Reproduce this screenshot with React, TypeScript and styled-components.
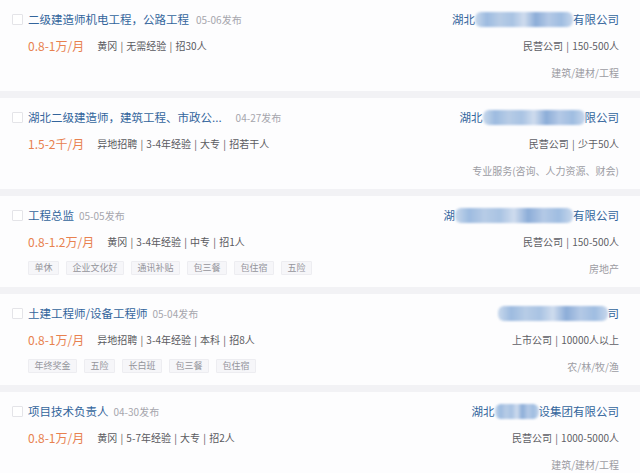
import React from "react";
import styled, { createGlobalStyle } from "styled-components";

const Global = createGlobalStyle`
  html, body { margin: 0; padding: 0; background: #f2f2f5; overflow: hidden; }
  body { font-family: "Noto Sans CJK SC", "Noto Sans", sans-serif; }
`;

const List = styled.div`
  width: 640px;
  height: 473px;
  display: flex;
  flex-direction: column;
  gap: 7px;
  overflow: hidden;
  background: #f2f2f5;
`;

const Card = styled.div`
  flex: 0 0 91px;
  height: 91px;
  box-sizing: border-box;
  background: #fdfdfe;
  display: flex;
  justify-content: space-between;
  padding: 6px 21px 0 12px;
`;

const Left = styled.div`
  display: flex;
  flex-direction: column;
`;

const Right = styled.div`
  display: flex;
  flex-direction: column;
  align-items: flex-end;
`;

const Row = styled.div<{ $h?: number }>`
  height: ${(p) => p.$h ?? 26}px;
  display: flex;
  align-items: center;
  white-space: nowrap;
`;

const Check = styled.span`
  width: 9px;
  height: 9px;
  border: 1px solid #e4e4e8;
  border-radius: 1px;
  background: #fff;
  margin-right: 5px;
  flex: none;
`;

const Title = styled.span`
  font-size: 11.5px;
  color: #33659c;
`;

const DateText = styled.span<{ $gap: number }>`
  font-size: 10px;
  color: #a6a6ad;
  margin-left: ${(p) => p.$gap}px;
`;

const Salary = styled.span`
  font-size: 12px;
  color: #e8814f;
  margin-left: 16px;
  margin-right: 13px;
`;

const Info = styled.span`
  font-size: 10px;
  color: #5a5a60;
  word-spacing: 1px;
`;

const Tags = styled.div`
  display: flex;
  gap: 7px;
  margin-left: 16px;
`;

const Tag = styled.span`
  height: 14px;
  line-height: 14px;
  padding: 0 5.5px;
  font-size: 9px;
  color: #94949b;
  background: #f6f6f9;
  border: 1px solid #ededf1;
  border-radius: 1px;
  box-sizing: border-box;
  display: inline-flex;
  align-items: center;
`;

const Company = styled.span`
  font-size: 11.5px;
  color: #33659c;
  display: inline-flex;
  align-items: center;
`;

const Blur = styled.span<{ $w: number }>`
  display: inline-block;
  width: ${(p) => p.$w}px;
  height: 15px;
  border-radius: 6px;
  filter: blur(1.2px);
  background: linear-gradient(
    90deg,
    #c9d9ec 0%,
    #9dbbe0 12%,
    #b7cce6 25%,
    #a9c3e3 38%,
    #cfdcee 50%,
    #8cadd8 62%,
    #b4c9e6 75%,
    #9fbde1 88%,
    #c7d7ec 100%
  );
`;

const CompanyType = styled.span`
  font-size: 10px;
  color: #5f5f66;
  word-spacing: 1px;
`;

const Industry = styled.span`
  font-size: 10px;
  color: #9c9ca3;
`;

type Job = {
  title: string;
  date: string;
  dateGap: number;
  salary: string;
  info: string;
  tags?: string[];
  companyPre: string;
  blur: number;
  companyPost: string;
  type: string;
  industry: string;
};

const jobs: Job[] = [
  {
    title: "二级建造师机电工程，公路工程",
    date: "05-06发布",
    dateGap: 7,
    salary: "0.8-1万/月",
    info: "黄冈 | 无需经验 | 招30人",
    companyPre: "湖北",
    blur: 98,
    companyPost: "有限公司",
    type: "民营公司 | 150-500人",
    industry: "建筑/建材/工程",
  },
  {
    title: "湖北二级建造师，建筑工程、市政公...",
    date: "04-27发布",
    dateGap: 14,
    salary: "1.5-2千/月",
    info: "异地招聘 | 3-4年经验 | 大专 | 招若干人",
    companyPre: "湖北",
    blur: 102,
    companyPost: "限公司",
    type: "民营公司 | 少于50人",
    industry: "专业服务(咨询、人力资源、财会)",
  },
  {
    title: "工程总监",
    date: "05-05发布",
    dateGap: 5,
    salary: "0.8-1.2万/月",
    info: "黄冈 | 3-4年经验 | 中专 | 招1人",
    tags: ["单休", "企业文化好", "通讯补贴", "包三餐", "包住宿", "五险"],
    companyPre: "湖",
    blur: 118,
    companyPost: "有限公司",
    type: "民营公司 | 150-500人",
    industry: "房地产",
  },
  {
    title: "土建工程师/设备工程师",
    date: "05-04发布",
    dateGap: 5,
    salary: "0.8-1万/月",
    info: "异地招聘 | 3-4年经验 | 本科 | 招8人",
    tags: ["年终奖金", "五险", "长白班", "包三餐", "包住宿"],
    companyPre: "",
    blur: 110,
    companyPost: "司",
    type: "上市公司 | 10000人以上",
    industry: "农/林/牧/渔",
  },
  {
    title: "项目技术负责人",
    date: "04-30发布",
    dateGap: 5,
    salary: "0.8-1万/月",
    info: "黄冈 | 5-7年经验 | 大专 | 招2人",
    companyPre: "湖北",
    blur: 44,
    companyPost: "设集团有限公司",
    type: "民营公司 | 1000-5000人",
    industry: "建筑/建材/工程",
  },
];

export default function App() {
  return (
    <>
      <Global />
      <List>
        {jobs.map((j, i) => (
          <Card key={i}>
            <Left>
              <Row>
                <Check />
                <Title>{j.title}</Title>
                <DateText $gap={j.dateGap}>{j.date}</DateText>
              </Row>
              <Row $h={27}>
                <Salary>{j.salary}</Salary>
                <Info>{j.info}</Info>
              </Row>
              {j.tags && (
                <Row>
                  <Tags>
                    {j.tags.map((t) => (
                      <Tag key={t}>{t}</Tag>
                    ))}
                  </Tags>
                </Row>
              )}
            </Left>
            <Right>
              <Row>
                <Company>
                  {j.companyPre}
                  <Blur $w={j.blur} />
                  {j.companyPost}
                </Company>
              </Row>
              <Row $h={27}>
                <CompanyType>{j.type}</CompanyType>
              </Row>
              <Row>
                <Industry>{j.industry}</Industry>
              </Row>
            </Right>
          </Card>
        ))}
      </List>
    </>
  );
}
